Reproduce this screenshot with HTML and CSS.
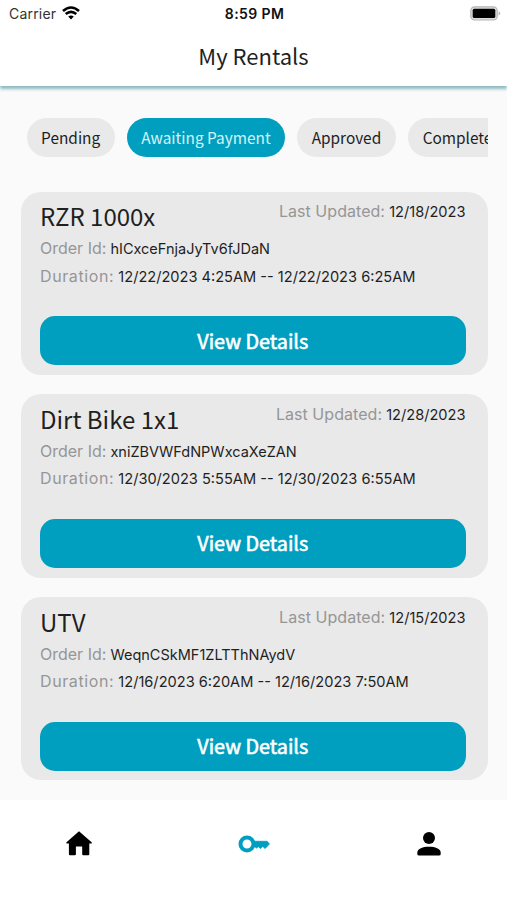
FILE: index.html
```html
<!DOCTYPE html>
<html lang="en">
<head>
<meta charset="utf-8">
<title>My Rentals</title>
<link rel="stylesheet" href="styles.css">
</head>
<body>
<header class="header">
  <div class="status">
    <div class="carrier"><span>Carrier</span>
      <svg class="wifi" viewBox="0 0 18 14"><path d="M9 13.6 6.2 10.6Q9 8.5 11.8 10.6Z" fill="#000"/><path d="M1 5Q9-2 17 5M3.7 8.1Q9 3.5 14.3 8.1" fill="none" stroke="#000" stroke-width="2.6"/></svg>
    </div>
    <div class="time">8:59 PM</div>
    <svg class="battery" viewBox="0 0 31 15"><rect x=".8" y=".8" width="26.4" height="13.2" rx="3.8" fill="#ddd" stroke="#b5b5b5" stroke-width="1.2"/><rect x="2.7" y="2.7" width="22.6" height="9.4" rx="1.6"/><path d="M28.6 5.2Q32 7.4 28.6 9.6Z" fill="#b5b5b5"/></svg>
  </div>
  <h1 class="title">My Rentals</h1>
</header>
<main class="content">
  <div class="chips">
    <div class="chip pending">Pending</div>
    <div class="chip awaiting active">Awaiting Payment</div>
    <div class="chip approved">Approved</div>
    <div class="chip completed">Completed</div>
  </div>
  <section class="card">
    <div class="top"><h2>RZR 1000x</h2><p class="updated"><span class="label">Last Updated:</span> 12/18/2023</p></div>
    <p class="row order"><span class="label">Order Id:</span> hICxceFnjaJyTv6fJDaN</p>
    <p class="row duration"><span class="label">Duration:</span> 12/22/2023 4:25AM -- 12/22/2023 6:25AM</p>
    <button class="button">View Details</button>
  </section>
  <section class="card">
    <div class="top"><h2>Dirt Bike 1x1</h2><p class="updated"><span class="label">Last Updated:</span> 12/28/2023</p></div>
    <p class="row order"><span class="label">Order Id:</span> xniZBVWFdNPWxcaXeZAN</p>
    <p class="row duration"><span class="label">Duration:</span> 12/30/2023 5:55AM -- 12/30/2023 6:55AM</p>
    <button class="button">View Details</button>
  </section>
  <section class="card">
    <div class="top"><h2>UTV</h2><p class="updated"><span class="label">Last Updated:</span> 12/15/2023</p></div>
    <p class="row order"><span class="label">Order Id:</span> WeqnCSkMF1ZLTThNAydV</p>
    <p class="row duration"><span class="label">Duration:</span> 12/16/2023 6:20AM -- 12/16/2023 7:50AM</p>
    <button class="button">View Details</button>
  </section>
</main>
<nav class="nav">
  <svg class="home" viewBox="0 0 26 25"><path d="M13 .3 25.6 11.3Q26.4 12.6 25 12.6H23.3V23.2Q23.3 24.3 22.2 24.3H17.3Q16.2 24.3 16.2 23.2V15.6H9.9V23.2Q9.9 24.3 8.8 24.3H4Q2.9 24.3 2.9 23.2V12.6H1Q-.4 12.6.5 11.3Z"/></svg>
  <svg class="key" viewBox="0 0 32 18"><circle cx="9" cy="9" r="6.5" fill="none" stroke="#019fbf" stroke-width="4"/><path d="M16 6.3H29.2L31.4 9 27.2 13.5 24.7 11.4 22.5 13.5 20.3 11.7 18.5 13 16.5 11.5Z" fill="#019fbf" stroke="#019fbf" stroke-width=".8" stroke-linejoin="round"/></svg>
  <svg class="person" viewBox="0 0 24 24"><circle cx="12" cy="6" r="6"/><path d="M.3 22V20.7C.3 16.5 6 14.8 12 14.8S23.7 16.5 23.7 20.7V22Q23.7 23.6 22 23.6H2Q.3 23.6.3 22Z"/></svg>
</nav>
</body>
</html>
```
FILE: styles.css
```css
* { box-sizing: border-box; }
body {
  margin: 0;
  width: 507px;
  height: 900px;
  overflow: hidden;
  display: flex;
  flex-direction: column;
  background: #fafafa;
  color: #1f1f1f;
  font-family: Inter, sans-serif;
}
h1, h2, p { margin: 0; font-weight: 400; }
svg { display: block; }
.header {
  height: 86px;
  flex: none;
  background: #fff;
  box-shadow: 0 3px 3px #8dbac3;
}
.status {
  height: 27px;
  display: grid;
  grid-template-columns: 1fr auto 1fr;
  align-items: center;
  padding: 0 6px 0 9px;
  color: #111;
}
.carrier { display: flex; align-items: center; gap: 6px; font-size: 14px; letter-spacing: .2px; color: #333; }
.wifi { width: 18px; height: 14px; margin-top: -1px; }
.time { font-size: 14px; font-weight: 600; letter-spacing: .4px; margin-right: 1px; }
.battery { width: 31px; height: 15px; justify-self: end; margin-top: -1px; }
.title {
  text-align: center;
  font: 400 22px/57px "Noto Sans CJK JP", sans-serif;
}
.content { flex: none; height: 714px; padding: 32px 19.5px 0 20.5px; }
.chips { display: flex; gap: 12px; padding-left: 6px; overflow: hidden; margin-bottom: 34.5px; }
.chip {
  flex: none;
  height: 39px;
  border-radius: 20px;
  background: #e9e9e9;
  text-align: center;
  white-space: nowrap;
  font: 400 15.4px/39px "Noto Sans CJK JP", sans-serif;
}
.pending { width: 88.3px; }
.awaiting { width: 158.3px; }
.approved { width: 98.7px; }
.completed { width: 109px; }
.active { background: #019fbf; color: #d5f3f8; }
.card {
  height: 183.3px;
  margin-bottom: 19.5px;
  padding: 7.5px 22px 0 19.5px;
  border-radius: 20px;
  background: #e9e9e9;
}
.top { display: flex; justify-content: space-between; height: 36.2px; }
h2 { font: 400 24px/34px "Noto Sans CJK JP", sans-serif; }
.updated, .row { font-size: 14.6px; white-space: nowrap; }
.updated { line-height: 24px; }
.row { line-height: 26.5px; }
.order { font-size: 14.5px; }
.label { color: #969696; font-size: 16px; }
.updated .label { letter-spacing: .05px; }
.duration .label { letter-spacing: .6px; }
.button {
  display: block;
  width: 100%;
  height: 49px;
  margin-top: 26px;
  padding: 0;
  border: 0;
  border-radius: 15px;
  background: #019fbf;
  color: #fff;
  font: 400 19.8px/48px "Noto Sans CJK JP", sans-serif;
  -webkit-text-stroke: .6px #fff;
}
.nav {
  height: 100px;
  flex: none;
  display: flex;
  justify-content: space-between;
  align-items: center;
  padding: 0 66.5px 13px 66px;
  background: #fff;
}
.home { width: 26px; height: 25px; }
.key { width: 32px; height: 18px; }
.person { width: 24px; height: 24px; }
```
